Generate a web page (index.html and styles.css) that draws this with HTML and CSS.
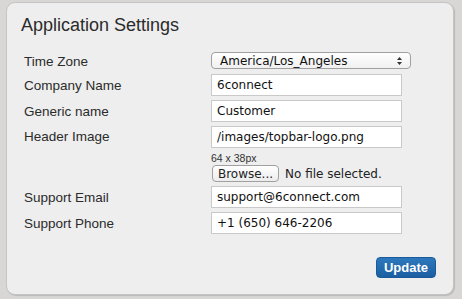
FILE: index.html
```html
<!DOCTYPE html>
<html lang="en">
<head>
    <meta charset="utf-8">
    <title>Application Settings</title>
    <link rel="stylesheet" href="styles.css">
</head>
<body>
<div class="panel">
    <h2 class="title">Application Settings</h2>
    <form class="settings">
        <div class="row">
            <label for="tz">Time Zone</label>
            <div class="select" id="tz">
                <span>America/Los_Angeles</span>
                <svg width="7" height="10" viewBox="0 0 7 10"><path d="M3.5 1 L6 4 H1 Z M3.5 9 L6 6 H1 Z" fill="#333"/></svg>
            </div>
        </div>
        <div class="row">
            <label for="company">Company Name</label>
            <input class="field" id="company" type="text" value="6connect">
        </div>
        <div class="row">
            <label for="generic">Generic name</label>
            <input class="field" id="generic" type="text" value="Customer">
        </div>
        <div class="row top">
            <label for="header">Header Image</label>
            <div class="stack">
                <input class="field" id="header" type="text" value="/images/topbar-logo.png">
                <div class="hint">64 x 38px</div>
                <div class="file">
                    <span class="browse">Browse...</span>
                    <span class="nofile">No file selected.</span>
                </div>
            </div>
        </div>
        <div class="row">
            <label for="email">Support Email</label>
            <input class="field" id="email" type="text" value="support@6connect.com">
        </div>
        <div class="row">
            <label for="phone">Support Phone</label>
            <input class="field" id="phone" type="text" value="+1 (650) 646-2206">
        </div>
        <div class="actions">
            <button class="update" type="button">Update</button>
        </div>
    </form>
</div>
</body>
</html>
```

FILE: styles.css
```css
html, body {
    height: 100%;
}

body {
    margin: 0;
    background: #d8d7d5;
    font-family: "Liberation Sans", Arial, sans-serif;
    color: #222;
    padding: 2px 8px 4px 6px;
    box-sizing: border-box;
}

.panel {
    height: 100%;
    box-sizing: border-box;
    background: #eeeeee;
    border: 1px solid #c4c4c4;
    border-radius: 9px;
    box-shadow: 1px 1px 1px #b8b8b8;
    padding: 11px 14px 0 14px;
    display: flex;
    flex-direction: column;
}

.title {
    margin: 0 0 16px 0;
    font-size: 18px;
    font-weight: normal;
    line-height: 22px;
    color: #2b2b2b;
}

.settings {
    padding-left: 3px;
    display: flex;
    flex-direction: column;
    gap: 4px;
}

.row {
    display: flex;
    align-items: center;
}

.row.top {
    align-items: flex-start;
}

.row label {
    width: 187px;
    font-size: 13.5px;
    color: #2b2b2b;
}

.row.top label {
    padding-top: 3px;
}

.field {
    width: 191px;
    height: 22px;
    box-sizing: border-box;
    margin: 0;
    padding: 0 5px;
    border: 1px solid #c9c9c9;
    background: #fff;
    font: 12px "DejaVu Sans", Verdana, sans-serif;
    color: #111;
    outline: none;
}

.select {
    width: 200px;
    height: 17px;
    box-sizing: border-box;
    margin-bottom: 1px;
    border: 1px solid #a0a0a0;
    border-radius: 4px;
    background: linear-gradient(#ffffff, #f0f0f0);
    display: flex;
    align-items: center;
    justify-content: space-between;
    padding: 0 7px 0 8px;
    font: 12px "DejaVu Sans", Verdana, sans-serif;
    color: #111;
}

.stack {
    display: flex;
    flex-direction: column;
}

.hint {
    font-size: 10.5px;
    color: #333;
    margin: 4px 0 1px 0;
}

.file {
    display: flex;
    align-items: center;
    gap: 6px;
    font: 12px "DejaVu Sans", Verdana, sans-serif;
    color: #222;
}

.browse {
    margin-left: 1px;
    height: 17px;
    width: 67px;
    box-sizing: border-box;
    border: 1px solid #a0a0a0;
    border-radius: 4px;
    background: linear-gradient(#ffffff, #ececec);
    display: flex;
    align-items: center;
    justify-content: center;
}

.actions {
    display: flex;
    justify-content: flex-end;
    margin-top: 19px;
    padding-right: 3px;
}

.update {
    width: 60px;
    height: 21px;
    border: 1px solid #1a5a98;
    border-radius: 4px;
    background: linear-gradient(#2d78bd, #1b5fa2);
    color: #fff;
    font: bold 13px "Liberation Sans", Arial, sans-serif;
    padding: 0;
}
```
